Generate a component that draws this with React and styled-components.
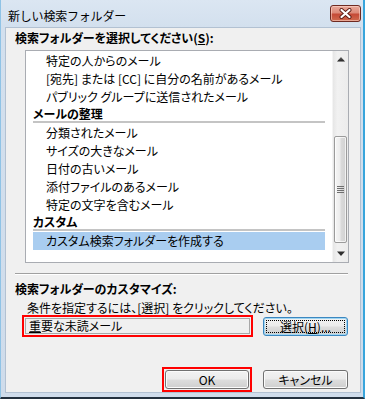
import React from "react";
import styled, { createGlobalStyle } from "styled-components";

const GlobalStyle = createGlobalStyle`
  html, body { margin: 0; padding: 0; background: #ffffff; }
  body { font-family: "Noto Sans CJK JP", "Noto Sans", sans-serif; font-size: 12px; color: #000; }
  * { box-sizing: border-box; }
`;

const Window = styled.div`
  width: 365px;
  height: 399px;
  display: flex;
  flex-direction: column;
  background: linear-gradient(to bottom, #dbe6f2 0px, #d3e0ee 27px, #cfdceb 100%);
  border-left: 1px solid #8fc3e6;
  border-right: 2px solid #38a5dc;
  border-bottom: 2px solid #23303e;
`;

const TitleBar = styled.div`
  height: 27px;
  flex: none;
  display: flex;
  align-items: flex-start;
  justify-content: space-between;
  padding: 0 2px 0 7px;
`;

const Title = styled.span`
  font-size: 12px;
  line-height: 14px;
  margin-top: 9px;
  color: #000;
  letter-spacing: -0.2px;
`;

const CloseButton = styled.div`
  width: 31px;
  height: 17px;
  margin-top: 5px;
  border: 1px solid #6e2a22;
  border-radius: 3px;
  background: linear-gradient(to bottom, #e9a99b 0%, #dd8a79 45%, #c54a37 55%, #cf6a4e 100%);
  box-shadow: inset 0 0 0 1px rgba(255, 220, 210, 0.55);
  display: flex;
  align-items: center;
  justify-content: center;
`;

const Client = styled.div`
  flex: 1;
  margin: 0 2px 4px 4px;
  border: 1px solid #b2c1d2;
  background: #f0f0f0;
  display: flex;
  flex-direction: column;
  padding: 2px 12px 0 9px;
`;

const SectionLabel = styled.div`
  font-weight: 700;
  line-height: 15px;
  height: 15px;
  font-feature-settings: "palt";
  margin-top: ${(p) => p.$top || 0}px;
  white-space: nowrap;
`;

const Key = styled.span`
  text-decoration: underline;
  text-underline-offset: 1px;
`;

const ListBox = styled.div`
  margin: 5px -1px 0 10px;
  height: 213px;
  border: 1px solid #a9acb2;
  background: #fff;
  display: flex;
  padding-top: 1px;
`;

const ListContent = styled.div`
  flex: 1;
  display: flex;
  flex-direction: column;
`;

const Item = styled.div`
  height: 18px;
  line-height: 18px;
  margin: 0 7px;
  padding-left: 13px;
  white-space: nowrap;
  font-feature-settings: "palt";
  background: ${(p) => (p.$selected ? "#a9cdf0" : "transparent")};
`;

const GroupHeader = styled.div`
  height: 17px;
  line-height: 15px;
  margin: 0 7px 1px;
  font-weight: 700;
  font-feature-settings: "palt";
  border-bottom: 2px solid #c4c4c4;
  white-space: nowrap;
`;

const ScrollBar = styled.div`
  width: 16px;
  margin-top: -1px;
  display: flex;
  flex-direction: column;
  background: linear-gradient(to right, #e6e6e6 0%, #f1f1f1 30%, #ececec 100%);
  border-left: 1px solid #f4f4f4;
`;

const ArrowButton = styled.div`
  height: 17px;
  flex: none;
  display: flex;
  align-items: center;
  justify-content: center;
`;

const Track = styled.div`
  flex: 1;
  display: flex;
  flex-direction: column;
  padding: 0 1px;
`;

const Thumb = styled.div`
  height: ${(p) => p.$size}px;
  margin-top: ${(p) => p.$offset}px;
  border: 1px solid #9b9b9b;
  border-radius: 2px;
  background: linear-gradient(to right, #f6f6f6 0%, #ececec 45%, #dadada 55%, #d2d2d2 100%);
  box-shadow: inset 0 0 0 1px rgba(255, 255, 255, 0.7);
  display: flex;
  align-items: center;
  justify-content: center;
`;

const Separator = styled.div`
  margin-top: 10px;
  height: 2px;
  border-top: 1px solid #a0a0a0;
  border-bottom: 1px solid #ffffff;
`;

const Hint = styled.div`
  margin-top: 4px;
  padding-left: 12px;
  line-height: 15px;
  height: 15px;
  font-feature-settings: "palt";
  white-space: nowrap;
`;

const FieldRow = styled.div`
  display: flex;
  align-items: center;
  margin-left: 7px;
  gap: 10px;
`;

const RedMark = styled.div`
  border: 2px solid #ff0000;
  padding: 1px;
  width: ${(p) => p.$width}px;
  flex: none;
`;

const Field = styled.div`
  height: 16px;
  border: 1px solid #a8a8a8;
  background: #f0f0f0;
  padding-left: 3px;
  line-height: 14px;
  font-feature-settings: "palt";
  white-space: nowrap;
`;

const Button = styled.div`
  width: ${(p) => p.$width || 85}px;
  height: 19px;
  flex: none;
  border: 1px solid ${(p) => (p.$focused ? "#3c87c0" : "#707070")};
  border-radius: 3px;
  background: linear-gradient(to bottom, #f2f2f2 0%, #ebebeb 48%, #dddddd 52%, #cfcfcf 100%);
  box-shadow: inset 0 0 0 1px ${(p) => (p.$focused ? "#9fd6f3" : "#fbfbfb")};
  display: flex;
  align-items: center;
  justify-content: center;
  line-height: 15px;
  font-feature-settings: "palt";
  outline: ${(p) => (p.$focused ? "1px dotted #000" : "none")};
  outline-offset: -4px;
  white-space: nowrap;
`;

const ButtonRow = styled.div`
  margin-top: 30px;
  display: flex;
  justify-content: flex-end;
  align-items: center;
  gap: 11px;
`;

const UpArrow = () => (
  <svg width="8" height="5" viewBox="0 0 8 5">
    <defs>
      <linearGradient id="ag" x1="0" y1="0" x2="0" y2="1">
        <stop offset="0" stopColor="#6b6b6b" />
        <stop offset="1" stopColor="#1e1e1e" />
      </linearGradient>
    </defs>
    <polygon points="4,0 8,4.5 0,4.5" fill="url(#ag)" />
  </svg>
);

const DownArrow = () => (
  <svg width="8" height="5" viewBox="0 0 8 5">
    <polygon points="0,0.5 8,0.5 4,5" fill="#2e2e2e" />
  </svg>
);

const Grip = () => (
  <svg width="7" height="7" viewBox="0 0 7 7">
    <rect x="0" y="0" width="7" height="1" fill="#6f6f6f" />
    <rect x="0" y="2" width="7" height="1" fill="#6f6f6f" />
    <rect x="0" y="4" width="7" height="1" fill="#6f6f6f" />
    <rect x="0" y="6" width="7" height="1" fill="#6f6f6f" />
  </svg>
);

const CloseGlyph = () => (
  <svg width="13" height="11" viewBox="0 0 13 11">
    <path d="M2.5 2 L10.5 9 M10.5 2 L2.5 9" stroke="#5b1b14" strokeWidth="4" strokeLinecap="round" />
    <path d="M2.5 2 L10.5 9 M10.5 2 L2.5 9" stroke="#ffffff" strokeWidth="2.2" strokeLinecap="round" />
  </svg>
);

export default function App() {
  return (
    <>
      <GlobalStyle />
      <Window>
        <TitleBar>
          <Title>新しい検索フォルダー</Title>
          <CloseButton>
            <CloseGlyph />
          </CloseButton>
        </TitleBar>
        <Client>
          <SectionLabel>
            検索フォルダーを選択してください(<Key>S</Key>):
          </SectionLabel>
          <ListBox>
            <ListContent>
              <Item>特定の人からのメール</Item>
              <Item>[宛先] または [CC] に自分の名前があるメール</Item>
              <Item>パブリック グループに送信されたメール</Item>
              <GroupHeader>メールの整理</GroupHeader>
              <Item>分類されたメール</Item>
              <Item>サイズの大きなメール</Item>
              <Item>日付の古いメール</Item>
              <Item>添付ファイルのあるメール</Item>
              <Item>特定の文字を含むメール</Item>
              <GroupHeader>カスタム</GroupHeader>
              <Item $selected>カスタム検索フォルダーを作成する</Item>
            </ListContent>
            <ScrollBar>
              <ArrowButton>
                <UpArrow />
              </ArrowButton>
              <Track>
                <Thumb $offset={68} $size={107}>
                  <Grip />
                </Thumb>
              </Track>
              <ArrowButton>
                <DownArrow />
              </ArrowButton>
            </ScrollBar>
          </ListBox>
          <Separator />
          <SectionLabel $top={6}>検索フォルダーのカスタマイズ:</SectionLabel>
          <Hint>条件を指定するには、[選択] をクリックしてください。</Hint>
          <FieldRow>
            <RedMark $width={231}>
              <Field>
                <Key>重</Key>要な未読メール
              </Field>
            </RedMark>
            <Button $focused>
              選択(<Key>H</Key>)...
            </Button>
          </FieldRow>
          <ButtonRow>
            <RedMark $width={90}>
              <Button $width={84}>OK</Button>
            </RedMark>
            <Button>キャンセル</Button>
          </ButtonRow>
        </Client>
      </Window>
    </>
  );
}
